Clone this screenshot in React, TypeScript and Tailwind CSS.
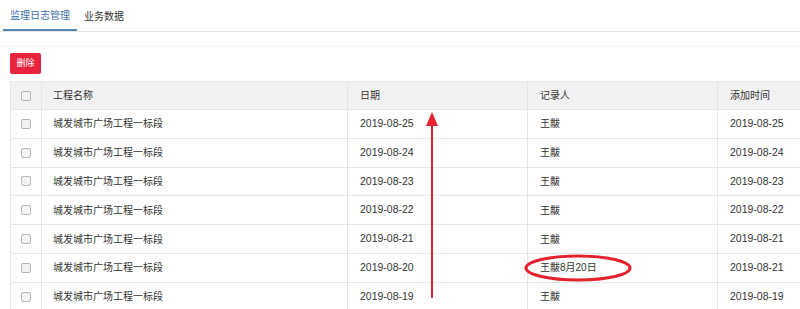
import React from 'react'

const rows = [
  { name: '城发城市广场工程一标段', date: '2019-08-25', who: '王黻', added: '2019-08-25' },
  { name: '城发城市广场工程一标段', date: '2019-08-24', who: '王黻', added: '2019-08-24' },
  { name: '城发城市广场工程一标段', date: '2019-08-23', who: '王黻', added: '2019-08-23' },
  { name: '城发城市广场工程一标段', date: '2019-08-22', who: '王黻', added: '2019-08-22' },
  { name: '城发城市广场工程一标段', date: '2019-08-21', who: '王黻', added: '2019-08-21' },
  { name: '城发城市广场工程一标段', date: '2019-08-20', who: '王黻8月20日', added: '2019-08-21' },
  { name: '城发城市广场工程一标段', date: '2019-08-19', who: '王黻', added: '2019-08-19' },
]

function Check() {
  return <span className="block w-[10px] h-[10px] mx-auto rounded-[2px] border border-[#b5b5b5] bg-[#f3f3f3]" />
}

export default function App() {
  return (
    <div
      className="relative w-[800px] h-[309px] overflow-hidden bg-white text-[#333]"
      style={{ fontFamily: '"Liberation Sans", "Noto Sans CJK SC", sans-serif' }}
    >
      {/* tabs */}
      <div className="flex h-[32px] pl-[3px] border-b border-[#e4e4e4]">
        <div className="flex items-center px-[7px] h-[31px] border-b-2 border-[#5a86b6] text-[10px] text-[#3d6fa6] pt-[2px]">
          监理日志管理
        </div>
        <div className="flex items-center px-[7px] h-[31px] text-[10px] pt-[2px]">业务数据</div>
      </div>

      <div className="mt-[14px] border-t border-[#f1f1f1] pt-[6px] pl-[10px]">
        <button className="w-[31px] h-[21px] rounded-[2px] bg-[#e8243d] text-white text-[9px] flex items-center justify-center">
          删除
        </button>

        <table className="mt-[7px] border-collapse table-fixed w-[890px] text-[10px]">
          <colgroup>
            <col className="w-[31px]" />
            <col className="w-[306px]" />
            <col className="w-[180px]" />
            <col className="w-[190px]" />
            <col className="w-[183px]" />
          </colgroup>
          <thead>
            <tr className="h-[28px] bg-[#f2f2f2]">
              <th className="border border-[#e6e6e6] font-normal">
                <Check />
              </th>
              <th className="border border-[#e6e6e6] font-normal text-left pl-[11px]">工程名称</th>
              <th className="border border-[#e6e6e6] font-normal text-left pl-[12px]">日期</th>
              <th className="border border-[#e6e6e6] font-normal text-left pl-[12px]">记录人</th>
              <th className="border border-[#e6e6e6] font-normal text-left pl-[12px]">添加时间</th>
            </tr>
          </thead>
          <tbody>
            {rows.map((r, i) => (
              <tr key={i} className="h-[28.8px]">
                <td className="border border-[#e6e6e6]">
                  <Check />
                </td>
                <td className="border border-[#e6e6e6] pl-[11px]">{r.name}</td>
                <td className="border border-[#e6e6e6] pl-[12px] text-[10.5px]">{r.date}</td>
                <td className="border border-[#e6e6e6] pl-[12px]">{r.who}</td>
                <td className="border border-[#e6e6e6] pl-[12px] text-[10.5px]">{r.added}</td>
              </tr>
            ))}
          </tbody>
        </table>
      </div>

      {/* annotations */}
      <svg className="absolute left-0 top-0 pointer-events-none" width="800" height="309">
        <line x1="432" y1="124" x2="432" y2="298" stroke="#e62230" strokeWidth="2" />
        <polygon points="432,112 426,126 438,126" fill="#e62230" />
        <ellipse cx="578" cy="268" rx="52" ry="12" fill="none" stroke="#e3222e" strokeWidth="3" />
      </svg>
    </div>
  )
}
